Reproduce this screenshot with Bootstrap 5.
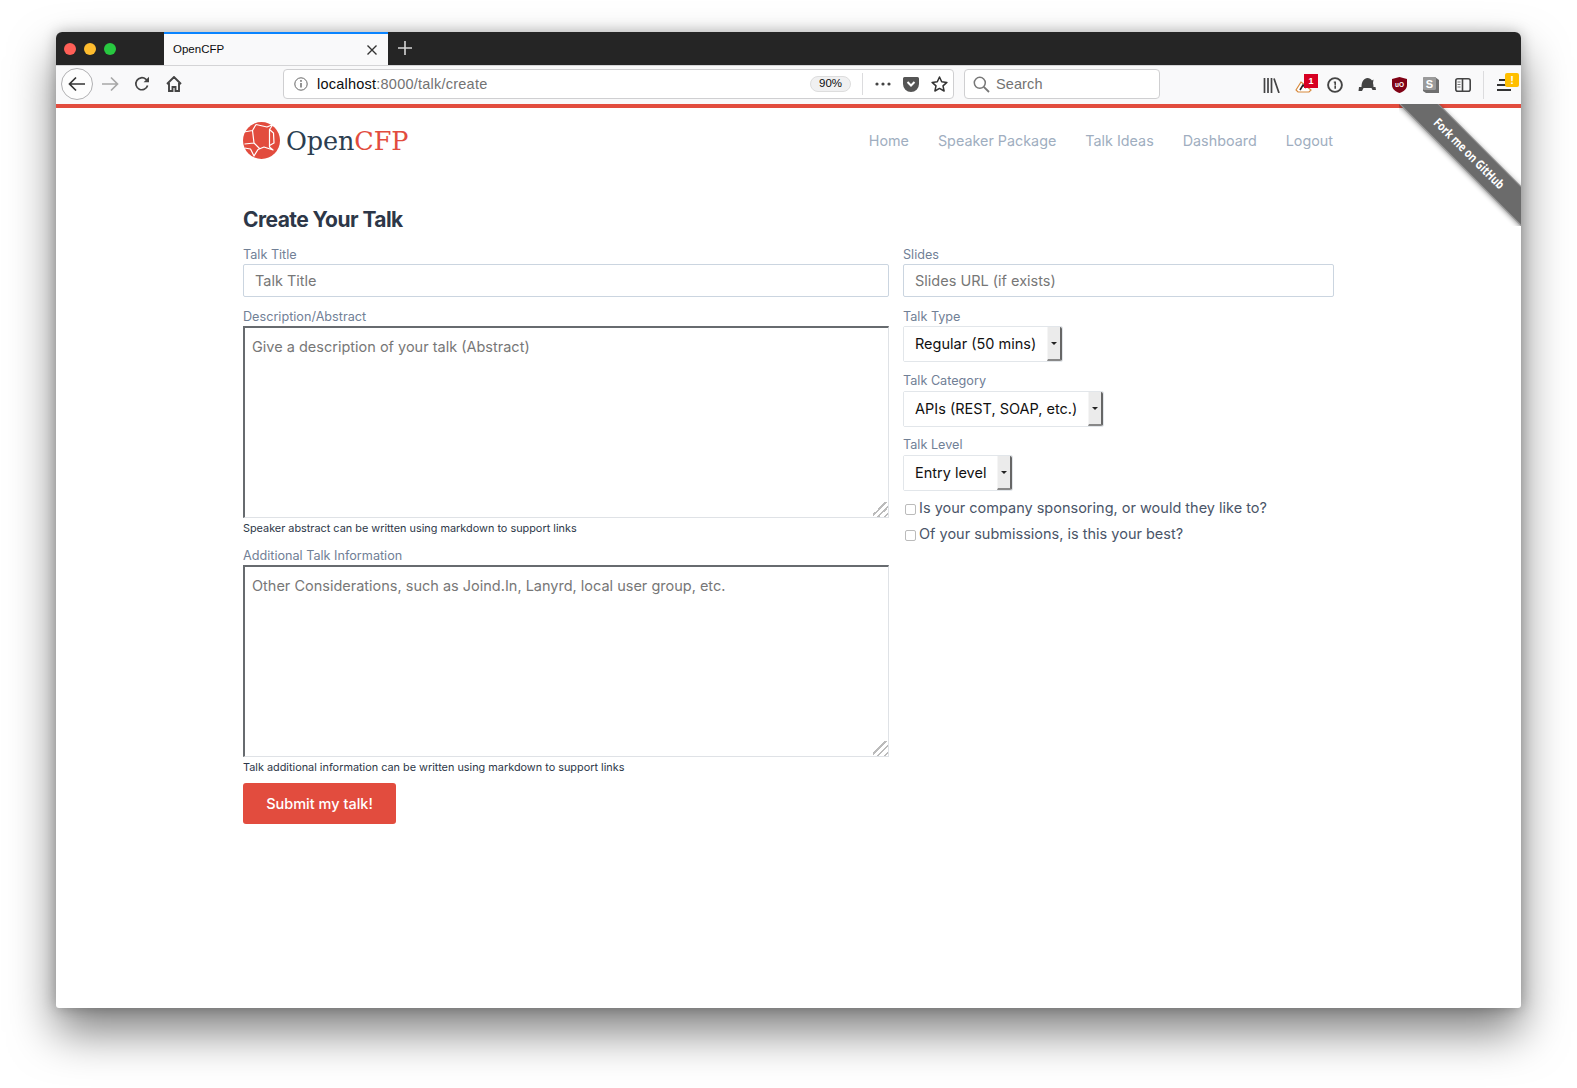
<!DOCTYPE html>
<html lang="en">
<head>
<meta charset="utf-8">
<title>OpenCFP</title>
<link href="https://cdn.jsdelivr.net/npm/bootstrap@5.3.0/dist/css/bootstrap.min.css" rel="stylesheet">
<style>
html,body{height:1088px;overflow:hidden;background:#fff}
body{font-family:Inter,"Liberation Sans",sans-serif;padding:32px 56px 0;color:#2d3748}
.win{width:1465px;height:976px;border-radius:6px 6px 3px 3px;box-shadow:0 24px 46px rgba(0,0,0,.5),0 0 14px rgba(0,0,0,.25);background:#fff;position:relative;overflow:visible}
.tabbar{height:33px;background:#252525;border-radius:6px 6px 0 0}
.lights{width:108px;padding-left:8px;gap:8px}
.dot-l{width:12px;height:12px;border-radius:50%}
.browser-tab{width:224px;background:#f9f9fa;border-top:2px solid #0a84ff;font-size:11.5px;color:#0c0c0d;padding:0 10px 0 9px;font-family:"Liberation Sans",sans-serif}
.newtab{width:34px;padding-bottom:2px}
.toolbar{height:39px;background:#f9f9fa;padding:2px 0 0 5px;border-top:1px solid #d4d4d6}
.tb-ic{width:32px;height:32px;flex:none}
.backbtn{border:1px solid #b1b1b3;border-radius:50%;background:#fdfdfd;margin-right:1px}
.urlbar{width:671px;height:30px;margin-left:93px;margin-top:1px;background:#fff;border:1px solid #cfcfd1;border-radius:4px;font-family:"Liberation Sans",Inter,sans-serif;font-size:14.5px;color:#0c0c0d}
.info-slot{width:33px;flex:none}
.urltext{letter-spacing:.23px;padding-top:2px}
.urlgray{color:#737373}
.zoompill{width:41px;height:16px;border-radius:8px;background:#f0f0f1;border:1px solid #ddd;font-size:11.5px;margin-right:11px}
.bar-sep{width:1px;height:22px;background:#dcdcde;flex:none}
.searchbox{width:196px;height:30px;margin-left:10px;margin-top:1px;background:#fff;border:1px solid #cfcfd1;border-radius:4px;font-family:"Liberation Sans",sans-serif;font-size:14.5px;color:#737373;letter-spacing:.1px}
.searchbox span{margin-left:-2px;padding-top:2px}
.slot-dots{width:40px}
.slot-pocket{width:16px;margin-right:6px}
.slot-star{width:28px}
.tools{margin-left:95px;margin-top:2px;height:30px}
.pin-badge{position:absolute;font:700 9px/1 "Liberation Sans",sans-serif;display:flex;align-items:center;justify-content:center}
.redb{top:5px;right:1px;width:14px;height:14px;background:#d70022;color:#fff}
.yelb{top:4px;right:1px;width:14px;height:14px;background:#ffbf00;color:#fff;font-size:11px;border-radius:2px}
.pagearea{border-top:4px solid #e24c3e;height:904px;position:relative}
.sitewrap{width:1091px;margin-left:187px}
.sitehead{height:64px}
.brandtxt{font-family:"DejaVu Serif","Liberation Serif",serif;font-size:25.5px;color:#2c3e50;letter-spacing:-.1px;margin-left:6px;line-height:1;padding-top:3px}
.brandtxt b{font-weight:400;color:#e24c3e}
.sitenav{margin-right:1px}
.sitelink{font-size:14.35px;color:#a0aec0;text-decoration:none;margin-left:29px;padding-top:2px}
.pagetitle{font-size:21px;font-weight:700;color:#2d3748;letter-spacing:-.55px;line-height:28px;margin:34px 0 13px}
.colmain{width:646px;flex:none}
.colside{width:431px;flex:none}
.formcols{gap:14px}
.flabel{display:block;font-size:12.65px;line-height:16px;height:16px;margin:0 0 1px;color:#718096}
.finput.form-control{height:33px;font-size:14.5px;padding:0 11px;border:1px solid #cbd5e0;border-radius:2px;color:#333;margin-bottom:12px;font-family:Inter,sans-serif}
.finput::placeholder,.farea::placeholder{color:#777}
.farea.form-control{height:192px;width:646px;font-size:14.5px;line-height:20px;padding:9px 7px;border-style:solid;border-width:2px 1px 1px 2px;border-color:#676b6f #dfe2e6 #dfe2e6 #676b6f;border-radius:0;resize:both;display:block}
.farea::-webkit-resizer{background:linear-gradient(135deg,transparent 40%,#bbb 40%,#bbb 48%,transparent 48%,transparent 62%,#bbb 62%,#bbb 70%,transparent 70%,transparent 84%,#bbb 84%,#bbb 92%,transparent 92%)}
.fhelp{font-size:10.87px;line-height:15px;color:#2d3748;margin:3px 0 12px}
.fhelp.tail{margin-bottom:8px}
.subbtn.btn{width:153px;height:41px;background:#e24c3e;border:0;border-radius:3px;color:#fff;font-size:14.5px;font-weight:500;padding:0}
.selbox{height:36px;border:1px solid #e2e6ea;border-radius:2px;background:#fff;vertical-align:top}
.selbox select.form-select{appearance:none;background-image:none;border:0;border-radius:0;height:34px;padding:0 10px 0 11px;font-size:14.5px;color:#111;width:auto;font-family:Inter,sans-serif}
.sel-a{margin-bottom:11px}
.sel-b{margin-bottom:10px}
.sel-c{margin-bottom:4px}
.flabel.pull{margin-bottom:2px}
.selarrow{width:15px;background:#ebebeb;border-right:2px solid #666;border-bottom:2px solid #888;border-left:1px solid #f5f5f5;border-radius:0 2px 2px 0}
.selarrow::after{content:"";border:3px solid transparent;border-top:3.5px solid #222;margin-top:3px}
.chkrow{font-size:14.5px;color:#4a5568;line-height:26px;height:26px;margin:0}
.chkrow input.form-check-input{width:11px;height:11px;margin:3px 3px 0 2px;border:1px solid #bbb;border-radius:2px;flex:none}
.ribbonclip{position:absolute;top:-4px;right:0;width:122px;height:122px;overflow:hidden;pointer-events:none}
.ribbonband{position:absolute;left:-40px;top:36px;width:220px;height:28px;background:#6b6b6b;color:#fff;transform:rotate(45deg);box-shadow:0 1px 5px rgba(0,0,0,.45);border-top:1px solid #8a8a8a;border-bottom:1px solid #9a9a9a;font:700 12.5px/26px "Open Sans",sans-serif;text-align:center;text-decoration:none}
.ribbonband span{display:inline-block;transform:scaleX(.8)}
</style>
</head>
<body>
<div class="win">
  <div class="tabbar d-flex align-items-stretch">
    <div class="lights d-flex align-items-center">
      <span class="dot-l" style="background:#ff5f57"></span><span class="dot-l" style="background:#febc2e"></span><span class="dot-l" style="background:#28c840"></span>
    </div>
    <div class="browser-tab d-flex align-items-center justify-content-between">
      <span>OpenCFP</span>
      <svg width="12" height="12" viewBox="0 0 12 12"><path d="M1.5 1.5l9 9m0-9l-9 9" stroke="#333" stroke-width="1.4" fill="none"/></svg>
    </div>
    <div class="newtab d-flex align-items-center justify-content-center">
      <svg width="14" height="14" viewBox="0 0 14 14"><path d="M7 0v14M0 7h14" stroke="#d5d5d5" stroke-width="1.6"/></svg>
    </div>
  </div>

  <div class="toolbar d-flex align-items-start">
    <div class="tb-ic backbtn d-flex align-items-center justify-content-center">
      <svg width="18" height="16" viewBox="0 0 18 16"><path d="M8 1.5L1.5 8 8 14.5M2 8h15" stroke="#333" stroke-width="1.7" fill="none"/></svg>
    </div>
    <div class="tb-ic d-flex align-items-center justify-content-center">
      <svg width="18" height="16" viewBox="0 0 18 16"><path d="M10 1.5L16.5 8 10 14.5M16 8H1" stroke="#a8a8a8" stroke-width="1.7" fill="none"/></svg>
    </div>
    <div class="tb-ic d-flex align-items-center justify-content-center">
      <svg width="16" height="16" viewBox="0 0 16 16"><path d="M13.6 9.5A6 6 0 1 1 11.8 3.2L14 5" stroke="#444" stroke-width="1.7" fill="none"/><path d="M15 .8v5.4H9.6z" fill="#444"/></svg>
    </div>
    <div class="tb-ic d-flex align-items-center justify-content-center">
      <svg width="16" height="16" viewBox="0 0 16 16"><path d="M1 8l7-7 7 7M3 7v8h3.5v-4h3v4H13V7" stroke="#444" stroke-width="1.9" fill="none"/></svg>
    </div>
    <div class="urlbar d-flex align-items-center">
      <div class="info-slot d-flex justify-content-center">
        <svg width="14" height="14" viewBox="0 0 14 14"><circle cx="7" cy="7" r="6.2" stroke="#666" fill="none"/><path d="M7 6v4.5" stroke="#666" stroke-width="1.4"/><circle cx="7" cy="3.9" r=".9" fill="#666"/></svg>
      </div>
      <div class="flex-grow-1 urltext">localhost<span class="urlgray">:8000/talk/create</span></div>
      <div class="zoompill d-flex align-items-center justify-content-center">90%</div>
      <span class="bar-sep"></span>
      <div class="slot-dots d-flex align-items-center justify-content-center">
        <svg width="16" height="4" viewBox="0 0 16 4"><circle cx="2" cy="2" r="1.6" fill="#444"/><circle cx="8" cy="2" r="1.6" fill="#444"/><circle cx="14" cy="2" r="1.6" fill="#444"/></svg>
      </div>
      <div class="slot-pocket d-flex align-items-center justify-content-center">
        <svg width="16" height="15" viewBox="0 0 16 15"><path d="M1.5 0h13A1.5 1.5 0 0 1 16 1.5V7A8 8 0 0 1 0 7V1.5A1.5 1.5 0 0 1 1.5 0z" fill="#555"/><path d="M4.5 5L8 8.5 11.5 5" stroke="#fff" stroke-width="2" fill="none"/></svg>
      </div>
      <div class="slot-star d-flex align-items-center justify-content-center">
        <svg width="17" height="16" viewBox="0 0 17 16"><path d="M8.5 1l2.2 4.8 5.2.6-3.9 3.5 1.1 5.1-4.6-2.6-4.6 2.6 1.1-5.1L1.1 6.4l5.2-.6z" fill="none" stroke="#333" stroke-width="1.5" stroke-linejoin="round"/></svg>
      </div>
    </div>
    <div class="searchbox d-flex align-items-center">
      <svg class="mx-2" width="17" height="17" viewBox="0 0 17 17"><circle cx="6.8" cy="6.8" r="5.5" fill="none" stroke="#777" stroke-width="1.5"/><path d="M10.8 10.8l5.2 5.2" stroke="#777" stroke-width="1.8"/></svg>
      <span>Search</span>
    </div>
    <div class="tools d-flex align-items-center">
      <div class="tb-ic d-flex align-items-center justify-content-center">
        <svg width="17" height="15" viewBox="0 0 17 15"><path d="M1.5 0v15M5 0v15M8.5 0v15M11 .5L16 15" stroke="#444" stroke-width="1.7" fill="none"/></svg>
      </div>
      <div class="tb-ic d-flex align-items-center justify-content-center position-relative">
        <svg width="17" height="12" viewBox="0 0 17 12" style="margin-top:4px"><path d="M1 9l5-8 4 3 6 5-2 2H3z" fill="#fff" stroke="#d88a3c" stroke-width="1.2"/><path d="M5 9l3-5 3 3" stroke="#222" stroke-width="1.6" fill="none"/></svg>
        <span class="pin-badge redb">1</span>
      </div>
      <div class="tb-ic d-flex align-items-center justify-content-center">
        <svg width="16" height="16" viewBox="0 0 16 16"><circle cx="8" cy="8" r="6.9" fill="none" stroke="#444" stroke-width="1.9"/><path d="M6.8 4.5h2.2v3l-.6.8.6.9v2.6H7.4V8.9l.5-.6-.5-.7V5.7H6.8z" fill="#444"/></svg>
      </div>
      <div class="tb-ic d-flex align-items-center justify-content-center">
        <svg width="18" height="16" viewBox="0 0 18 16"><path d="M3.500 10C3.500 4.500 6 1 9.500 1c2 0 3.500 1 4.500 2.500L15.500 2.500 15 6c.4 1.200.5 2.600.5 4h2l.5 3h-3.500L13.500 11h-8L4 14H.5L1 10z" fill="#444"/></svg>
      </div>
      <div class="tb-ic d-flex align-items-center justify-content-center">
        <svg width="15" height="16" viewBox="0 0 15 16"><path d="M7.5 0L15 2v6c0 4-3.5 6.800-7.500 8C3.500 14.800 0 12 0 8V2z" fill="#800215"/><text x="7.500" y="9.500" text-anchor="middle" font-size="6.500" font-family="Liberation Sans" font-weight="700" fill="#fff">uO</text></svg>
      </div>
      <div class="tb-ic d-flex align-items-center justify-content-center">
        <svg width="16" height="16" viewBox="0 0 16 16"><path d="M1 0h11l4 3v13H3L0 14V1z" fill="#6f6f6f"/><rect width="13" height="13" rx="1.500" fill="#9b9b9b"/><text x="6.500" y="10.500" text-anchor="middle" font-size="11" font-family="Liberation Sans" font-weight="700" fill="#fff">S</text></svg>
      </div>
      <div class="tb-ic d-flex align-items-center justify-content-center">
        <svg width="16" height="14" viewBox="0 0 16 14"><rect x=".8" y=".8" width="14.400" height="12.400" rx="2" fill="none" stroke="#444" stroke-width="1.600"/><path d="M7.500 1v12" stroke="#444" stroke-width="1.600"/><path d="M2.500 4h3M2.500 6.500h3M2.500 9h3" stroke="#777"/></svg>
      </div>
      <span class="bar-sep ms-1" style="height:28px"></span>
      <div class="tb-ic d-flex align-items-center justify-content-center position-relative ms-1">
        <svg width="14" height="12" viewBox="0 0 14 12"><path d="M2 1h12M0 6h14M0 11h14" stroke="#333" stroke-width="1.800"/></svg>
        <span class="pin-badge yelb">!</span>
      </div>
    </div>
  </div>

  <div class="pagearea">
    <div class="sitewrap">
      <header class="sitehead d-flex align-items-center justify-content-between">
        <a href="#" class="d-flex align-items-center text-decoration-none">
          <svg width="37" height="37" viewBox="0 0 37 37">
            <circle cx="18.500" cy="18.500" r="18.500" fill="#e24c3e"/>
            <path d="M13 2.500L24 5 30 2.500 26.500 7.500V25l3.500 3-9-3-6 2.500L11 34 7.500 27l-6-1M13 2.500L9.500 8.500 1 10M9.500 8.500L11 21l-9.500 1M11 21l6 6" fill="none" stroke="#fff" stroke-width="1.200" stroke-linejoin="round"/>
            <path d="M26.500 7.500l4 3.500.5 10-4.500 2.500" fill="none" stroke="#fff" stroke-width="1.200"/>
          </svg>
          <span class="brandtxt">Open<b>CFP</b></span>
        </a>
        <nav class="d-flex sitenav">
          <a class="sitelink" href="#">Home</a>
          <a class="sitelink" href="#">Speaker Package</a>
          <a class="sitelink" href="#">Talk Ideas</a>
          <a class="sitelink" href="#">Dashboard</a>
          <a class="sitelink" href="#">Logout</a>
        </nav>
      </header>
      <h1 class="pagetitle">Create Your Talk</h1>
      <form class="d-flex formcols">
        <div class="colmain">
          <label class="flabel">Talk Title</label>
          <input class="form-control finput" placeholder="Talk Title">
          <label class="flabel">Description/Abstract</label>
          <textarea class="form-control farea" placeholder="Give a description of your talk (Abstract)"></textarea>
          <p class="fhelp">Speaker abstract can be written using markdown to support links</p>
          <label class="flabel">Additional Talk Information</label>
          <textarea class="form-control farea" placeholder="Other Considerations, such as Joind.In, Lanyrd, local user group, etc."></textarea>
          <p class="fhelp tail">Talk additional information can be written using markdown to support links</p>
          <button type="button" class="btn subbtn">Submit my talk!</button>
        </div>
        <div class="colside">
          <label class="flabel">Slides</label>
          <input class="form-control finput" placeholder="Slides URL (if exists)">
          <label class="flabel">Talk Type</label>
          <div class="selbox sel-a d-inline-flex align-items-stretch"><select class="form-select"><option>Regular (50 mins)</option></select><span class="selarrow d-flex align-items-center justify-content-center"></span></div>
          <label class="flabel pull">Talk Category</label>
          <div class="selbox sel-b d-inline-flex align-items-stretch"><select class="form-select"><option>APIs (REST, SOAP, etc.)</option></select><span class="selarrow d-flex align-items-center justify-content-center"></span></div>
          <label class="flabel pull">Talk Level</label>
          <div class="selbox sel-c d-inline-flex align-items-stretch"><select class="form-select"><option>Entry level</option></select><span class="selarrow d-flex align-items-center justify-content-center"></span></div>
          <label class="chkrow d-flex align-items-center"><input class="form-check-input" type="checkbox">Is your company sponsoring, or would they like to?</label>
          <label class="chkrow d-flex align-items-center"><input class="form-check-input" type="checkbox">Of your submissions, is this your best?</label>
        </div>
      </form>
    </div>
    <div class="ribbonclip"><a class="ribbonband" href="#"><span>Fork me on GitHub</span></a></div>
  </div>
</div>
<script src="https://cdn.jsdelivr.net/npm/bootstrap@5.3.0/dist/js/bootstrap.bundle.min.js"></script>
</body>
</html>
